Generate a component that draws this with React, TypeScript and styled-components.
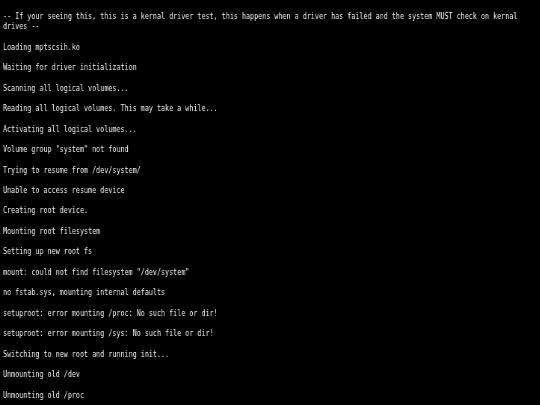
import React from "react";
import styled, { createGlobalStyle } from "styled-components";

const Global = createGlobalStyle`
  html, body {
    margin: 0;
    padding: 0;
    background: #000;
  }
  body {
    width: 540px;
    height: 405px;
    overflow: hidden;
  }
`;

const SCALE = 0.7475;
const LINE = 10.24;

const Screen = styled.div`
  width: 540px;
  height: 405px;
  background: #000;
  overflow: hidden;
  box-sizing: border-box;
  padding: 11px 0 0 3px;
`;

const Log = styled.div`
  width: ${534 / SCALE}px;
  transform: scaleX(${SCALE});
  transform-origin: 0 0;
  will-change: transform;
  -webkit-font-smoothing: antialiased;
  font-family: "DejaVu Sans Mono", "Liberation Mono", monospace;
  font-size: 9px;
  line-height: ${LINE}px;
  color: #f0f0f0;
`;

const Line = styled.p`
  margin: 0 0 ${LINE}px 0;
  white-space: pre-wrap;
`;

const lines = [
  "-- If your seeing this, this is a kernal driver test, this happens when a driver has failed and the system MUST check on kernal drives --",
  "Loading mptscsih.ko",
  "Waiting for driver initialization",
  "Scanning all logical volumes...",
  "Reading all logical volumes. This may take a while...",
  "Activating all logical volumes...",
  'Volume group "system" not found',
  "Trying to resume from /dev/system/",
  "Unable to access resume device",
  "Creating root device.",
  "Mounting root filesystem",
  "Setting up new root fs",
  'mount: could not find filesystem "/dev/system"',
  "no fstab.sys, mounting internal defaults",
  "setuproot: error mounting /proc: No such file or dir!",
  "setuproot: error mounting /sys: No such file or dir!",
  "Switching to new root and running init...",
  "Unmounting old /dev",
  "Unmounting old /proc",
];

export default function App() {
  return (
    <>
      <Global />
      <Screen>
        <Log>
          {lines.map((l, i) => (
            <Line key={i}>{l}</Line>
          ))}
        </Log>
      </Screen>
    </>
  );
}
